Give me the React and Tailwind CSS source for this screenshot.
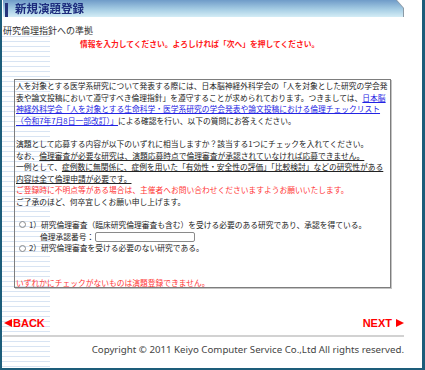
import React from 'react';

export default function App() {
  const jp = "font-['Noto_Sans_CJK_JP','Noto_Sans_CJK_SC',sans-serif]";
  const link = 'text-[#2323e3] underline underline-offset-[1px]';

  return (
    <div className={`w-[425px] h-[370px] overflow-hidden bg-white border-l-2 border-r-[3px] border-b-2 border-[#1d5d7a] bg-[repeating-linear-gradient(to_bottom,#d8e4f3_0px,#d8e4f3_1px,transparent_1px,transparent_5px)] bg-[length:48px_100%] bg-no-repeat bg-[position:0_36px] ${jp}`}>
      {/* Title bar */}
      <div className="ml-px w-[400px] [filter:drop-shadow(1px_0_0_#8c9aa5)]">
        <div className="h-[17px] flex items-center bg-[linear-gradient(to_bottom,#6f9bc8,#a6cde4_55%,#d4edf6)] [clip-path:polygon(0_0,calc(100%-7px)_0,100%_8px,100%_100%,0_100%)]">
          <div className="w-[3px] h-[14px] self-end ml-[2px] bg-[#26357c]" />
          <span className="ml-[7px] text-[11.5px] leading-[17px] font-bold text-[#1c2b7d]">新規演題登録</span>
        </div>
      </div>

      <div className="pl-px mt-[6.5px] text-[9px] leading-[13px] text-[#333]">研究倫理指針への準拠</div>
      <div className="pl-[78px] mt-px text-[7.75px] leading-[11px] font-bold text-[#ff1a1a] whitespace-nowrap">
        情報を入力してください。よろしければ「次へ」を押してください。
      </div>

      {/* Question box */}
      <div className="ml-[12px] mt-[30.5px] w-[377px] h-[209px] border border-[#7d7d7d] shadow-[1px_1px_0_#c4c4c4] pl-px text-[7.75px] leading-[11.6px] text-[#222] whitespace-nowrap">
        <div>人を対象とする医学系研究について発表する際には、日本脳神経外科学会の「人を対象とした研究の学会発</div>
        <div>表や論文投稿において遵守すべき倫理指針」を遵守することが求められております。つきましては、<span className={link}>日本脳</span></div>
        <div><span className={link}>神経外科学会「人を対象とする生命科学・医学系研究の学会発表や論文投稿における倫理チェックリスト</span></div>
        <div><span className={link}>（令和7年7月8日一部改訂）」</span>による確認を行い、以下の質問にお答えください。</div>
        <div className="h-[11.6px]" />
        <div>演題として応募する内容が以下のいずれに相当しますか？該当する1つにチェックを入れてください。</div>
        <div>なお、<span className="underline">倫理審査が必要な研究は、演題応募時点で倫理審査が承認されていなければ応募できません。</span></div>
        <div>一例として、<span className="underline">症例数に無関係に、症例を用いた「有効性・安全性の評価」「比較検討」などの研究性がある</span></div>
        <div><span className="underline">内容は全て倫理申請が必要です。</span></div>
        <div className="text-[#ff3535]">ご登録時に不明点等がある場合は、主催者へお問い合わせくださいますようお願いいたします。</div>
        <div>ご了承のほど、何卒宜しくお願い申し上げます。</div>
        <div className="h-[11.6px]" />
        <div className="flex items-center">
          <span className="inline-block w-[7px] h-[7px] rounded-full border border-[#8a8a8a] ml-[3px] mr-[3px]" />
          <span>1）研究倫理審査（臨床研究倫理審査も含む）を受ける必要のある研究であり、承認を得ている。</span>
        </div>
        <div className="flex items-center pl-[24px]">
          <span>倫理承認番号：</span>
          <span className="inline-block w-[100px] h-[10px] ml-px border border-[#8a8a8a] rounded-[2px] bg-white" />
        </div>
        <div className="flex items-center">
          <span className="inline-block w-[7px] h-[7px] rounded-full border border-[#8a8a8a] ml-[3px] mr-[3px]" />
          <span>2）研究倫理審査を受ける必要のない研究である。</span>
        </div>
        <div className="h-[23px]" />
        <div className="text-[#ff3535]">いずれかにチェックがないものは演題登録できません。</div>
      </div>

      {/* Navigation */}
      <div className="mt-[28px] ml-[2px] w-[400px] h-[14px] flex items-center justify-between font-['Liberation_Sans',Arial,sans-serif] font-bold text-[11px] text-[#ff0000]">
        <span className="flex items-center">
          <span className="inline-block w-0 h-0 border-y-[4.5px] border-y-transparent border-r-[8px] border-r-[#ff0000] mr-px" />
          BACK
        </span>
        <span className="flex items-center">
          NEXT
          <span className="inline-block w-0 h-0 border-y-[4.5px] border-y-transparent border-l-[8px] border-l-[#ff0000] ml-[4px]" />
        </span>
      </div>

      <div className="ml-px mt-[5px] w-[401px] border-t-2 border-[#d2d2d2]" />
      <div className="ml-px mt-[7px] w-[401px] text-right font-['Noto_Sans',sans-serif] text-[9.7px] leading-[12px] text-[#444]">
        Copyright © 2011 Keiyo Computer Service Co.,Ltd All rights reserved.
      </div>
    </div>
  );
}
